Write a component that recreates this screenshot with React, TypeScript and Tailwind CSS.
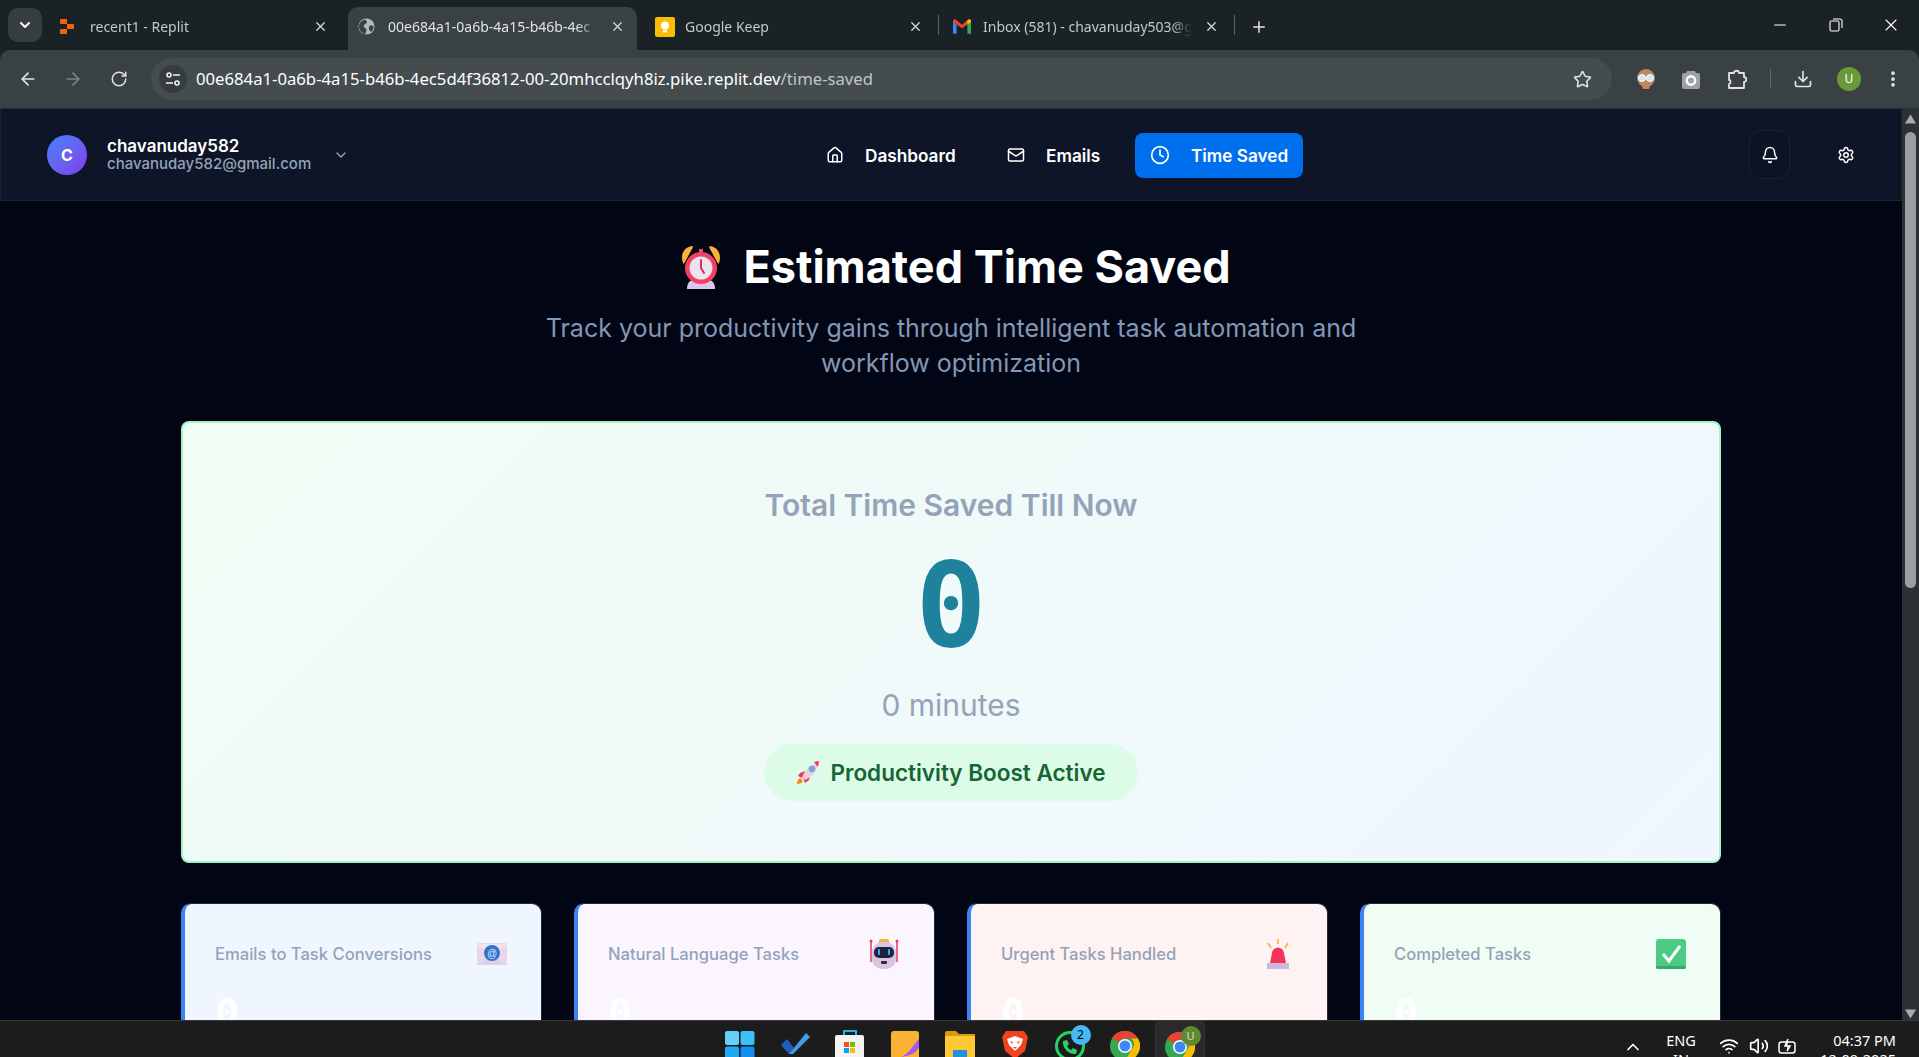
import React from "react";
import { ArrowLeft, ArrowRight, RotateCw, Star, Download, X, Plus, ChevronDown, ChevronUp, Home, Mail, Clock, Bell, Settings, Minus, Wifi, Volume2, EllipsisVertical } from "lucide-react";

function Alarm({ cls }: { cls: string }) {
  return (
    <svg viewBox="0 0 40 44" className={cls}>
      <path d="M2 18C-1 10 3 2 11 1c1 0 1 2 0 3L4 17c-1 2-2 2-2 1Z" fill="#f9b233" />
      <path d="M38 18c3-8-1-16-9-17-1 0-1 2 0 3l7 13c1 2 2 2 2 1Z" fill="#f9b233" />
      <path d="M6 44c0-6 3-9 6-9h16c3 0 6 3 6 9Z" fill="#dcc6ea" />
      <rect x="18" y="4" width="4" height="6" fill="#f04e6e" />
      <circle cx="20" cy="23" r="16" fill="#f43f63" />
      <circle cx="20" cy="23" r="11.5" fill="#ece3f0" />
      <path d="M20 15v8l3 5" stroke="#d9304f" strokeWidth="2" fill="none" strokeLinecap="round" />
    </svg>
  );
}

function Rocket({ cls }: { cls: string }) {
  return (
    <svg viewBox="0 0 24 24" className={cls}>
      <path d="M1 23c0-3 1-5 3-6l3 3c-1 2-3 3-6 3Z" fill="#f58a1f" />
      <path d="M4 12l5-2-3 7-4-2Z" fill="#f0326b" />
      <path d="M13 19l1-5-7 3 2 5Z" fill="#f0326b" />
      <path d="M7 17C8 10 14 3 22 2c0 8-7 14-13 17Z" fill="#e2d3df" />
      <path d="M18 1l5-1-1 6Z" fill="#f0324f" />
      <circle cx="16" cy="8" r="3" fill="#6aa6ee" stroke="#a99cc4" />
    </svg>
  );
}

function EnvelopeAt({ cls }: { cls: string }) {
  return (
    <svg viewBox="0 0 30 22" className={cls}>
      <rect width="30" height="22" rx="1.5" fill="#ecd5e8" />
      <path d="M0 22l15-10 15 10Z" fill="#e0cdea" />
      <path d="M0 1l15 12L30 1Z" fill="#f5e4ee" />
      <circle cx="15" cy="10" r="8" fill="#2f74d0" />
      <text x="15" y="13.5" textAnchor="middle" fontSize="10" fill="#d8e8fb" fontFamily="Liberation Sans, sans-serif">@</text>
    </svg>
  );
}

function RobotIcon({ cls }: { cls: string }) {
  return (
    <svg viewBox="0 0 32 30" className={cls}>
      <path d="M3 1v22M29 1v22" stroke="#ee3a6a" strokeWidth="1.5" />
      <circle cx="3" cy="2" r="1.5" fill="#ee3a6a" />
      <circle cx="29" cy="2" r="1.5" fill="#ee3a6a" />
      <rect x="11" y="0" width="10" height="5" rx="1.5" fill="#f9b233" />
      <rect x="4" y="3" width="24" height="27" rx="10" fill="#d8c6df" />
      <rect x="6" y="8" width="20" height="11" rx="5" fill="#1b2340" />
      <rect x="10" y="10" width="2" height="6" rx="1" fill="#3ea8f5" />
      <rect x="20" y="10" width="2" height="6" rx="1" fill="#3ea8f5" />
      <rect x="13" y="22" width="6" height="3" rx="1" fill="#2a2a3c" />
    </svg>
  );
}

function Siren({ cls }: { cls: string }) {
  return (
    <svg viewBox="0 0 24 30" className={cls}>
      <path d="M12 0v5M2 4l3 5M22 4l-3 5" stroke="#f9b233" strokeWidth="1.6" />
      <path d="M4 24L6 14c1-7 11-7 12 0l2 10Z" fill="#f4345a" />
      <rect x="1" y="24" width="22" height="6" fill="#cdb8e0" />
    </svg>
  );
}

function CheckBox({ cls }: { cls: string }) {
  return (
    <svg viewBox="0 0 30 30" className={cls}>
      <rect width="30" height="30" rx="3" fill="#4ccb86" />
      <rect y="27" width="30" height="3" rx="1.5" fill="#34a96c" />
      <path d="M7 15l6 7L24 7" stroke="#fff" strokeWidth="3" fill="none" />
    </svg>
  );
}

function ReplitIcon() {
  return (
    <svg viewBox="0 0 14 15" className="w-[14px] h-[15px] shrink-0">
      <path d="M0 1a1 1 0 0 1 1-1h6v5H1a1 1 0 0 1-1-1ZM7 5h6a1 1 0 0 1 1 1v3a1 1 0 0 1-1 1H7ZM0 11a1 1 0 0 1 1-1h6v5H1a1 1 0 0 1-1-1Z" fill="#f26207" />
    </svg>
  );
}

function GlobeSolid() {
  return (
    <svg viewBox="0 0 18 18" className="w-[17px] h-[17px] shrink-0">
      <circle cx="9" cy="9" r="8.5" fill="#b4b9bb" />
      <path d="M7 1.5c2 1 3 2 2 4-1 1-3 1-3 3 0 2 3 2 3 4 0 2-1 3-1 4.5-4-.5-7-4-7-8 0-3 2-6 6-7.5ZM13 8c2 0 3.500 0 3.500 1.500 0 2-1 4-3 5.500-1-2-2-3-2-4.500 0-1.500.5-2.500 1.500-2.500Z" fill="#394144" />
    </svg>
  );
}

function KeepIcon() {
  return (
    <svg viewBox="0 0 20 20" className="w-5 h-5 shrink-0">
      <rect width="20" height="20" rx="2" fill="#fbbc04" />
      <circle cx="10" cy="8.500" r="4" fill="#fff" />
      <rect x="8" y="13" width="4" height="2.500" fill="#fff" />
    </svg>
  );
}

function GmailIcon() {
  return (
    <svg viewBox="0 0 20 16" className="w-[18px] h-[15px] shrink-0">
      <path d="M0 2v14h4V6Z" fill="#4285f4" />
      <path d="M20 2v14h-4V6Z" fill="#34a853" />
      <path d="M0 2c0-2 3-3 4-1l6 5 6-5c1-2 4-1 4 1v1l-10 7L0 3Z" fill="#ea4335" />
      <path d="M16 1c1-1 4-1 4 1v1l-4 3Z" fill="#fbbc04" />
    </svg>
  );
}

function TabItem({ cls, active, icon, title }: { cls: string; active?: boolean; icon: React.ReactNode; title: string }) {
  return (
    <div className={`${cls} h-[43px] pb-[4px] flex items-center shrink-0 rounded-t-[10px] ${active ? "bg-[#394144]" : ""}`}>
      <span className="w-[30px] shrink-0 flex items-center">{icon}</span>
      <span className={`flex-1 min-w-0 overflow-hidden whitespace-nowrap text-[14px] [mask-image:linear-gradient(to_left,transparent,black_20px)] ${active ? "text-[#dfe3e4]" : "text-[#c3c8ca]"}`}>{title}</span>
      <X className="w-[15px] h-[15px] ml-[12px] shrink-0 text-[#d6dadb]" strokeWidth={2} />
    </div>
  );
}

function NavLink({ icon, label, active, cls }: { icon: React.ReactNode; label: string; active?: boolean; cls: string }) {
  return (
    <div className={`flex items-center h-[45px] rounded-lg text-white font-semibold text-[17.2px] ${cls} ${active ? "bg-[#006fee]" : ""}`}>
      {icon}
      <span className="mt-[1px]">{label}</span>
    </div>
  );
}

function StatCard({ title, icon, bg }: { title: string; icon: React.ReactNode; bg: string }) {
  return (
    <div className={`h-[200px] rounded-[10px] border border-[#1e293b] border-l-4 border-l-[#3b82f6] pl-[30px] pr-[34px] pt-[34px] ${bg}`}>
      <div className="flex items-center justify-between h-[32px]">
        <span className="text-[16.6px] font-medium text-[#94a3b8] mt-[1px]">{title}</span>
        {icon}
      </div>
      <div className="mt-[14px] font-['DejaVu_Sans_Mono',monospace] font-bold text-[40px] leading-[60px] text-white">0</div>
    </div>
  );
}

function TaskIcon({ children, active }: { children: React.ReactNode; active?: boolean }) {
  return (
    <div className={`w-[50px] h-[48px] mx-[2.5px] flex justify-center items-start pt-[11px] rounded-md ${active ? "bg-[#2a2a2a] border border-[#333]" : ""}`}>
      {children}
    </div>
  );
}

function ChromeLogo() {
  return (
    <svg viewBox="0 0 30 30" className="w-[30px] h-[30px]">
      <circle cx="15" cy="15" r="15" fill="#34a853" />
      <path d="M15 0a15 15 0 0 1 13 7.500H15a7.500 7.500 0 0 0-6.500 3.800L2 7A15 15 0 0 1 15 0Z" fill="#ea4335" />
      <path d="M28 7.500A15 15 0 0 1 15 30l6.500-11.300a7.500 7.500 0 0 0 0-11.200Z" fill="#fbbc04" />
      <circle cx="15" cy="15" r="7" fill="#fff" />
      <circle cx="15" cy="15" r="5.500" fill="#4285f4" />
    </svg>
  );
}

export default function App() {
  return (
    <div className="h-screen w-full overflow-hidden flex flex-col bg-[#1a2226] font-[Inter,sans-serif]">
      {/* browser tab strip */}
      <div className="h-[50px] shrink-0 flex items-end pl-[8px] font-['Noto_Sans',sans-serif]">
        <div className="w-[34px] h-[34px] mb-[8px] rounded-[10px] bg-[#363e41] flex items-center justify-center mr-[8px] shrink-0">
          <ChevronDown className="w-4 h-4 text-white" strokeWidth={3} />
        </div>
        <TabItem cls="w-[298px] pl-[10px] pr-[20px]" icon={<ReplitIcon />} title="recent1 - Replit" />
        <TabItem cls="w-[289px] pl-[10px] pr-[12px]" active icon={<GlobeSolid />} title="00e684a1-0a6b-4a15-b46b-4ec" />
        <TabItem cls="w-[301px] pl-[18px] pr-[15px]" icon={<KeepIcon />} title="Google Keep" />
        <div className="w-px h-[20px] bg-[#5a6164] mb-[15px] shrink-0" />
        <TabItem cls="w-[295px] pl-[14px] pr-[15px]" icon={<GmailIcon />} title="Inbox (581) - chavanuday503@g" />
        <div className="w-px h-[20px] bg-[#5a6164] mb-[15px] shrink-0" />
        <div className="h-[43px] pb-[4px] ml-[15px] flex items-center shrink-0">
          <Plus className="w-[18px] h-[18px] text-[#e2e5e6]" strokeWidth={2} />
        </div>
        <div className="flex-1" />
        <div className="h-[50px] flex items-center pr-[18px] shrink-0">
          <Minus className="w-[18px] h-[18px] text-white" strokeWidth={1.5} />
          <svg viewBox="0 0 14 14" className="w-[14px] h-[18px] ml-[40px]" fill="none" stroke="#fff" strokeWidth="1.100">
            <rect x="1" y="3" width="9" height="10" rx="1.500" />
            <path d="M4 1h7a2 2 0 0 1 2 2v7" />
          </svg>
          <X className="w-[20px] h-[20px] ml-[38px] text-white" strokeWidth={1.3} />
        </div>
      </div>

      {/* browser toolbar */}
      <div className="h-[59px] shrink-0 bg-[#394144] rounded-t-[10px] border-b border-[#2a3033] flex items-center pl-[18px] pr-[20px] text-[#d8dcdd]">
        <ArrowLeft className="w-[20px] h-[20px] text-[#dfe3e4] shrink-0" strokeWidth={2} />
        <ArrowRight className="w-[20px] h-[20px] ml-[25px] text-[#7b8285] shrink-0" strokeWidth={2} />
        <RotateCw className="w-[18px] h-[18px] ml-[27px] text-[#dfe3e4] shrink-0" strokeWidth={2} />
        <div className="w-[1461px] h-[42px] ml-[23px] rounded-full bg-[#444c4e] flex items-center pl-[8px] pr-[20px] shrink-0">
          <div className="w-[28px] h-[28px] rounded-full bg-[#363d40] flex items-center justify-center shrink-0">
            <svg viewBox="0 0 16 16" className="w-[16px] h-[16px]" fill="none" stroke="#f2f2f2" strokeWidth="1.600">
              <circle cx="4" cy="4" r="2" />
              <path d="M8 4h7M1 12h7" />
              <circle cx="12" cy="12" r="2" />
            </svg>
          </div>
          <span className="ml-[9px] text-[16.7px] font-['Noto_Sans',sans-serif] text-white whitespace-nowrap">
            00e684a1-0a6b-4a15-b46b-4ec5d4f36812-00-20mhcclqyh8iz.pike.replit.dev<span className="text-[#c0c5c7]">/time-saved</span>
          </span>
          <div className="flex-1" />
          <Star className="w-[19px] h-[19px] text-[#e0e3e4]" strokeWidth={2} />
        </div>
        <svg viewBox="0 0 20 22" className="w-[20px] h-[22px] ml-[24px] shrink-0">
          <circle cx="10" cy="10" r="9" fill="#b98a62" />
          <circle cx="6" cy="10" r="3.500" fill="#cfe6f5" stroke="#fff" />
          <circle cx="14" cy="10" r="3.500" fill="#cfe6f5" stroke="#fff" />
          <path d="M5 16h10l-2 5H7Z" fill="#c9805e" />
        </svg>
        <svg viewBox="0 0 18 20" className="w-[18px] h-[20px] ml-[26px] shrink-0">
          <path d="M5 2h8l1 2h2a2 2 0 0 1 2 2v12a2 2 0 0 1-2 2H2a2 2 0 0 1-2-2V6a2 2 0 0 1 2-2h2Z" fill="#9ea2a4" />
          <circle cx="9" cy="11.500" r="4.200" fill="none" stroke="#fff" strokeWidth="2.400" />
        </svg>
        <svg viewBox="0 0 20 20" className="w-[20px] h-[20px] ml-[27px] shrink-0" fill="none" stroke="#dfe3e4" strokeWidth="1.800" strokeLinejoin="round">
          <path d="M2 4h5c0-3 5-3 5 0h5v4c3 0 3 5 0 5v6H2v-4c2 0 2-4 0-4Z" />
        </svg>
        <div className="w-px h-[20px] bg-[#60676a] ml-[23px] shrink-0" />
        <Download className="w-[20px] h-[20px] ml-[22px] text-[#dfe3e4] shrink-0" strokeWidth={2} />
        <div className="w-[24px] h-[24px] ml-[24px] rounded-full bg-[#6a9a35] text-white text-[12px] flex items-center justify-center font-['Noto_Sans',sans-serif] shrink-0">U</div>
        <EllipsisVertical className="w-[20px] h-[20px] ml-[22px] text-[#dfe3e4] shrink-0" strokeWidth={2.5} />
      </div>

      {/* page viewport */}
      <div className="flex-1 min-h-0 flex">
        <div className="flex-1 min-w-0 overflow-hidden bg-[#020514]">
          <nav className="h-[92px] bg-[#0e1528] border border-[#1a2235] border-t-0 flex items-center pl-[46px]">
            <div className="w-[40px] h-[40px] rounded-full bg-gradient-to-br from-[#3b82f6] to-[#7c3aed] text-white font-bold text-base flex items-center justify-center shrink-0">C</div>
            <div className="ml-[20px] w-[226px] shrink-0 -mt-[2px]">
              <div className="text-white font-semibold text-[17px] leading-[20px]">chavanuday582</div>
              <div className="text-[#94a3b8] text-[15px] font-medium leading-[16px]">chavanuday582@gmail.com</div>
            </div>
            <ChevronDown className="w-4 h-4 text-[#94a3b8] shrink-0" />
            <div className="ml-[477px] flex items-center shrink-0 mt-[1px]">
              <NavLink cls="w-[181px]" icon={<Home className="w-[18px] h-[18px] mr-[21px]" />} label="Dashboard" />
              <NavLink cls="w-[128px]" icon={<Mail className="w-[18px] h-[18px] mr-[21px]" />} label="Emails" />
              <NavLink cls="w-[168px] pl-[15px]" active icon={<Clock className="w-[20px] h-[20px] mr-[21px]" />} label="Time Saved" />
            </div>
            <div className="ml-[446px] w-[41px] h-[49px] rounded-xl border border-[#1a2235] bg-[#0c1324] flex items-center justify-center shrink-0">
              <Bell className="w-[18px] h-[18px] text-white" />
            </div>
            <Settings className="w-[18px] h-[18px] ml-[47px] text-white shrink-0" />
          </nav>

          <main className="w-[1540px] mx-auto pt-[40px]">
            <h1 className="flex items-center justify-center gap-[22px] text-[45px] leading-[52px] font-bold text-white pl-[10px]">
              <Alarm cls="w-[40px] h-[44px] shrink-0" />
              <span>Estimated Time Saved</span>
            </h1>
            <p className="mt-[18px] text-center text-[25px] leading-[35px] text-[#8298b5] w-[860px] mx-auto">
              Track your productivity gains through intelligent task automation and workflow optimization
            </p>

            <section className="mt-[40px] h-[442px] rounded-lg border-2 border-[#a7f3c5] bg-[linear-gradient(135deg,#f0fdf4,#eff6ff)] flex flex-col items-center pt-[60px]">
              <h2 className="text-[30px] leading-[44px] font-semibold text-[#94a3b8]">Total Time Saved Till Now</h2>
              <div className="mt-[18px] h-[120px] font-['DejaVu_Sans_Mono',monospace] font-bold text-[118px] leading-[120px] text-[#1e829c]">0</div>
              <div className="mt-[20px] text-[30px] leading-[40px] text-[#94a3b8]">0 minutes</div>
              <div className="mt-[19px] w-[374px] h-[57px] rounded-full bg-[#dcfce7] flex items-center justify-center gap-[10px] text-[#166534] font-semibold text-[22.5px]">
                <Rocket cls="w-[24px] h-[24px] shrink-0" />
                <span>Productivity Boost Active</span>
              </div>
            </section>

            <section className="mt-[40px] grid grid-cols-4 gap-8">
              <StatCard title="Emails to Task Conversions" bg="bg-[#eff6ff]" icon={<EnvelopeAt cls="w-[30px] h-[22px]" />} />
              <StatCard title="Natural Language Tasks" bg="bg-[#faf5ff]" icon={<RobotIcon cls="w-[32px] h-[30px]" />} />
              <StatCard title="Urgent Tasks Handled" bg="bg-[#fef2f2]" icon={<Siren cls="w-[24px] h-[30px] mr-[3px]" />} />
              <StatCard title="Completed Tasks" bg="bg-[#f0fdf4]" icon={<CheckBox cls="w-[30px] h-[30px]" />} />
            </section>
          </main>
        </div>

        {/* page scrollbar */}
        <div className="w-[17px] shrink-0 bg-[#2c3134] flex flex-col items-center">
          <svg viewBox="0 0 12 10" className="w-[11px] h-[10px] mt-[5px]"><path d="M6 0l6 10H0Z" fill="#a8acae" /></svg>
          <div className="w-[11px] h-[456px] mt-[8px] rounded-full bg-[#9c9fa1]" />
          <div className="flex-1" />
          <svg viewBox="0 0 12 10" className="w-[11px] h-[10px] mb-[1px]"><path d="M6 10L12 0H0Z" fill="#a8acae" /></svg>
        </div>
      </div>

      {/* windows taskbar */}
      <div className="h-[37px] shrink-0 bg-[#1c1c1c] border-t border-[#3a3a3a] overflow-hidden flex items-start pl-[712px] font-['Noto_Sans',sans-serif] text-white">
        <div className="flex items-start -mt-[1px] shrink-0">
          <TaskIcon>
            <svg viewBox="0 0 30 30" className="w-[30px] h-[30px]">
              <rect width="14" height="14" x="0" y="0" rx="2" fill="#67d0fa" />
              <rect width="14" height="14" x="15.500" y="0" fill="#3cc0f8" rx="2" />
              <rect width="14" height="14" x="0" y="15.500" fill="#1fa8f5" rx="2" />
              <rect width="14" height="14" x="15.500" y="15.500" fill="#0f8ff0" rx="2" />
            </svg>
          </TaskIcon>
          <TaskIcon>
            <svg viewBox="0 0 30 24" className="w-[30px] h-[24px]">
              <path d="M1 14l6-6 7 9-5 6Z" fill="#1f5fc4" />
              <path d="M9 23L26 2l4 4-17 17Z" fill="#3f9ee8" />
            </svg>
          </TaskIcon>
          <TaskIcon>
            <svg viewBox="0 0 30 30" className="w-[30px] h-[30px] -mt-[1px]">
              <path d="M9 5V1h12v4" fill="none" stroke="#21b4e8" strokeWidth="2" />
              <rect y="5" width="29" height="25" rx="2" fill="#f3f3f3" />
              <rect x="9" y="12" width="5" height="5" fill="#f25022" />
              <rect x="15" y="12" width="5" height="5" fill="#7fba00" />
              <rect x="9" y="18" width="5" height="5" fill="#00a4ef" />
              <rect x="15" y="18" width="5" height="5" fill="#ffb900" />
            </svg>
          </TaskIcon>
          <TaskIcon>
            <svg viewBox="0 0 28 30" className="w-[28px] h-[30px]">
              <rect width="28" height="30" rx="3" fill="#f9b233" />
              <path d="M28 8v8c-3 6-7 8-18 10 8-3 12-12 18-18Z" fill="#a855f7" />
            </svg>
          </TaskIcon>
          <TaskIcon>
            <svg viewBox="0 0 30 26" className="w-[30px] h-[26px]">
              <path d="M0 2a2 2 0 0 1 2-2h9l3 3h16v23H0Z" fill="#d89c0c" />
              <rect y="5" width="30" height="21" fill="#fcc934" />
              <rect x="8" y="19" width="14" height="7" fill="#2a8fd8" />
            </svg>
          </TaskIcon>
          <TaskIcon>
            <svg viewBox="0 0 26 28" className="w-[26px] h-[28px]">
              <path d="M4 0h18l4 6-3 14-10 8-10-8L0 6Z" fill="#f1441d" />
              <path d="M5 8l8-3 8 3-2 6-3 3-3 3-3-3-3-3Z" fill="#fff" />
              <path d="M8 10l3 1-1 2ZM18 10l-3 1 1 2ZM11 16h4l-2 2Z" fill="#f1441d" />
            </svg>
          </TaskIcon>
          <TaskIcon>
            <div className="relative w-[30px] h-[30px]">
              <div className="w-[30px] h-[30px] rounded-full border-[3px] border-[#25d366]" />
              <svg viewBox="0 0 16 16" className="absolute left-[7px] top-[8px] w-[16px] h-[16px]">
                <path d="M1 2l4-1 2 4-2 2c1 2 2 3 4 4l2-2 4 2-1 4C7 16 0 9 1 2Z" fill="#25d366" />
              </svg>
              <div className="absolute -top-[6px] left-[16px] w-[20px] h-[20px] rounded-full bg-[#46b8f5] text-black text-[12px] leading-[20px] text-center">2</div>
            </div>
          </TaskIcon>
          <TaskIcon><ChromeLogo /></TaskIcon>
          <TaskIcon active>
            <div className="relative w-[30px] h-[30px]">
              <ChromeLogo />
              <div className="absolute -top-[6px] left-[16px] w-[20px] h-[20px] rounded-full bg-[#5f8a34] text-[#cfe0b8] text-[11px] leading-[20px] text-center">U</div>
            </div>
          </TaskIcon>
        </div>
        <ChevronUp className="w-[20px] h-[20px] ml-[416px] mt-[16px] text-white shrink-0" />
        <div className="ml-[18px] mt-[10px] w-[40px] text-center text-[14.5px] leading-[19px] shrink-0">ENG<br />IN</div>
        <Wifi className="w-[20px] h-[20px] ml-[18px] mt-[15px] shrink-0" />
        <Volume2 className="w-[20px] h-[20px] ml-[10px] mt-[15px] shrink-0" />
        <svg viewBox="0 0 20 20" className="w-[20px] h-[20px] ml-[9px] mt-[15px] shrink-0" fill="none" stroke="#fff" strokeWidth="1.500">
          <rect x="1" y="6" width="16" height="11" rx="2.500" />
          <path d="M10 3L7 10h5l-3 5" fill="#fff" />
        </svg>
        <div className="ml-[18px] mt-[10px] w-[80px] text-right text-[14.5px] leading-[19px] shrink-0 whitespace-nowrap">04:37 PM<br />12-09-2025</div>
      </div>
    </div>
  );
}
